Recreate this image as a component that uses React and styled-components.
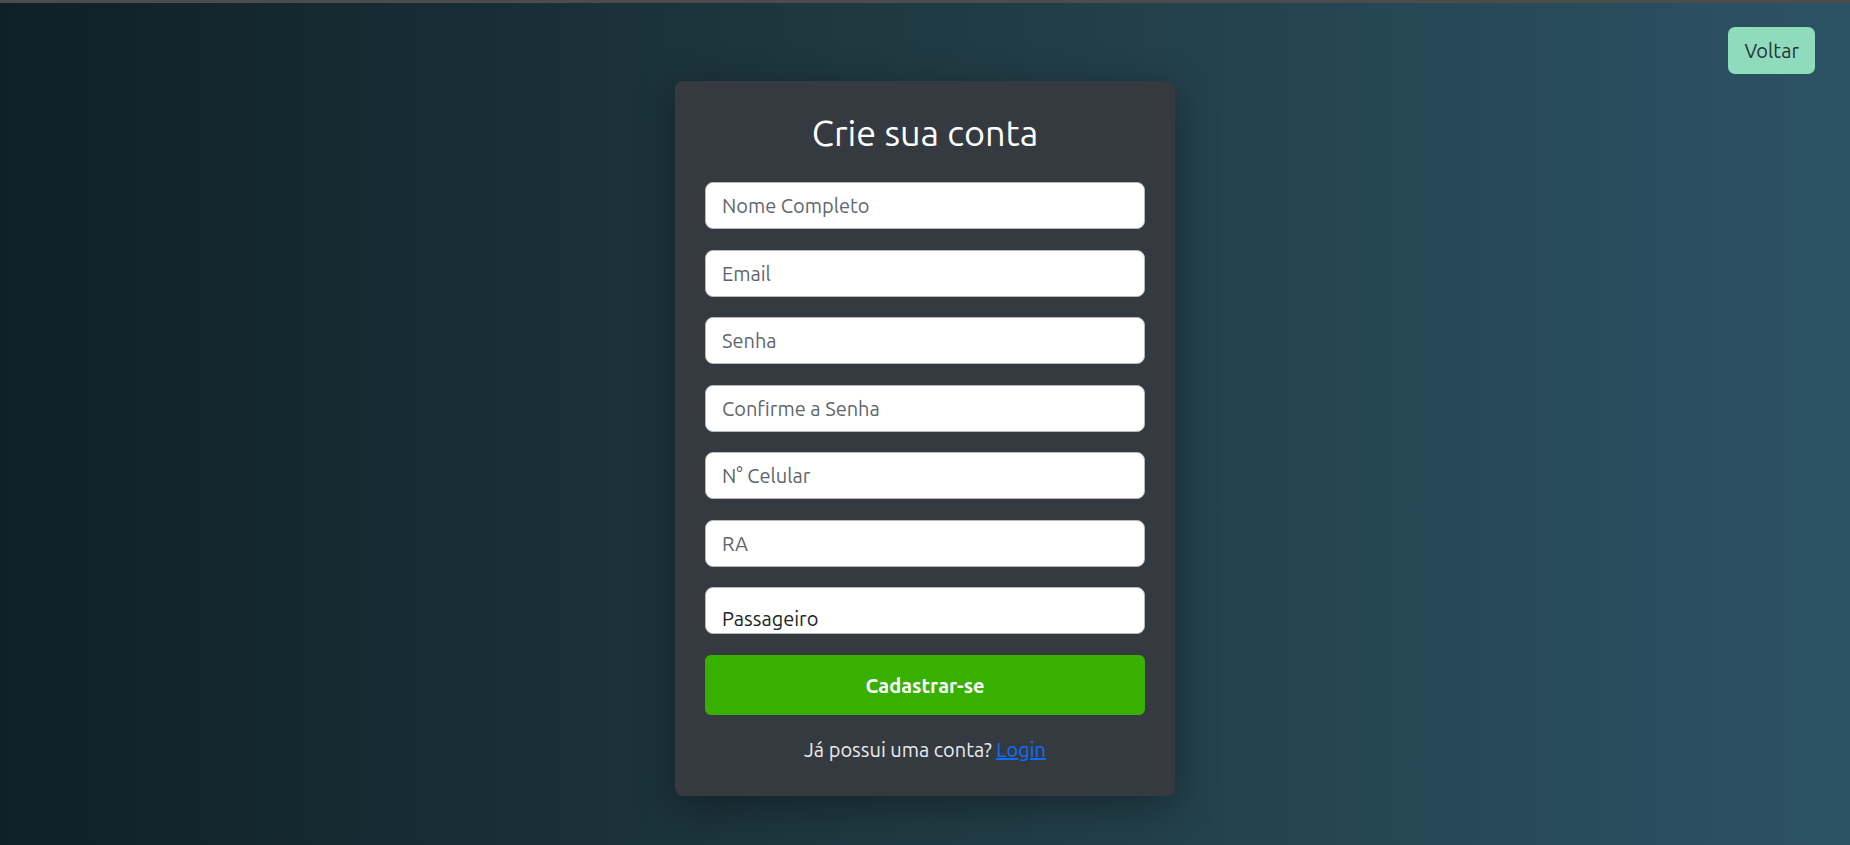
import React from "react";
import styled, { createGlobalStyle } from "styled-components";

const GlobalStyle = createGlobalStyle`
  html, body { margin: 0; padding: 0; height: 100%; }
  body {
    font-family: Ubuntu, "Open Sans", "Noto Sans", sans-serif;
    background: #0f2027;
  }
  #root { min-height: 100%; }
  * { box-sizing: border-box; }
`;

const Page = styled.div`
  min-height: 845px;
  background: linear-gradient(to right, #0f2027, #203a43, #2c5364);
  display: flex;
  flex-direction: column;
`;

const TopLine = styled.div`
  height: 3px;
  background: #4b4c4d;
`;

const Header = styled.div`
  display: flex;
  justify-content: flex-end;
  padding: 24px 35px 0 0;
`;

const BackButton = styled.button`
  height: 47px;
  padding: 0 16px;
  border: none;
  border-radius: 7px;
  background: #8fdcbc;
  color: #2b3035;
  font-family: inherit;
  font-size: 20px;
  cursor: pointer;
`;

const Main = styled.main`
  display: flex;
  justify-content: center;
  padding-top: 7px;
`;

const Card = styled.form`
  width: 500px;
  background: #343a40;
  border-radius: 8px;
  padding: 30px 30px 31px;
  box-shadow: 0 10px 40px rgba(0, 0, 0, 0.35);
  display: flex;
  flex-direction: column;
`;

const Title = styled.h2`
  margin: 0 0 28px;
  text-align: center;
  color: #ffffff;
  font-weight: 400;
  font-size: 36px;
  line-height: 1.2;
`;

const Field = styled.input`
  height: 47px;
  width: 100%;
  margin: 0 0 20.5px;
  padding: 0 16px;
  border: 1px solid #b5babf;
  border-radius: 8px;
  background: #fff;
  color: #212529;
  font-family: inherit;
  font-size: 20px;
  outline: none;
  &::placeholder { color: #5f666d; }
`;

const Select = styled.select`
  height: 47px;
  width: 100%;
  margin: 0 0 21px;
  padding: 16px 16px 0;
  border: 1px solid #b5babf;
  border-radius: 8px;
  background: #fff;
  color: #212529;
  font-family: inherit;
  font-size: 20px;
  appearance: none;
  -webkit-appearance: none;
  outline: none;
`;

const Submit = styled.button`
  height: 60px;
  width: 100%;
  border: none;
  border-radius: 6px;
  background: #38b000;
  color: #fff;
  font-family: inherit;
  font-size: 20px;
  font-weight: 700;
  cursor: pointer;
`;

const Footer = styled.p`
  margin: 20px 0 0;
  text-align: center;
  color: #e9ecef;
  font-size: 20px;
  line-height: 30px;
`;

const Link = styled.a`
  color: #0d6efd;
  text-decoration: underline;
`;

export default function App() {
  return (
    <>
      <GlobalStyle />
      <Page>
        <TopLine />
        <Header>
          <BackButton type="button">Voltar</BackButton>
        </Header>
        <Main>
          <Card onSubmit={(e) => e.preventDefault()}>
            <Title>Crie sua conta</Title>
            <Field type="text" placeholder="Nome Completo" />
            <Field type="email" placeholder="Email" />
            <Field type="password" placeholder="Senha" />
            <Field type="password" placeholder="Confirme a Senha" />
            <Field type="tel" placeholder="N° Celular" />
            <Field type="text" placeholder="RA" />
            <Select defaultValue="passageiro">
              <option value="passageiro">Passageiro</option>
              <option value="motorista">Motorista</option>
            </Select>
            <Submit type="submit">Cadastrar-se</Submit>
            <Footer>
              Já possui uma conta? <Link href="#">Login</Link>
            </Footer>
          </Card>
        </Main>
      </Page>
    </>
  );
}
